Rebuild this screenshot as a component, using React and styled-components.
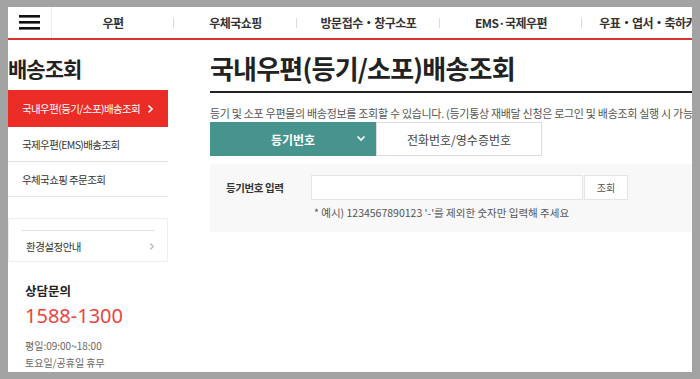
import React from "react";
import styled, { createGlobalStyle } from "styled-components";

const Global = createGlobalStyle`
  html, body { margin: 0; padding: 0; background: #a3a3a3; }
  body { font-family: "Noto Sans CJK KR", "Noto Sans", sans-serif; color: #222; }
  * { box-sizing: border-box; }
`;

const Frame = styled.div`
  margin: 7px 0 0 8px;
  width: 684px;
  height: 365px;
  background: #fff;
  overflow: hidden;
  display: flex;
  flex-direction: column;
`;

const Header = styled.header`
  height: 33px;
  flex: none;
  display: flex;
  align-items: stretch;
  border-bottom: 2px solid #d8342e;
  white-space: nowrap;
`;

const Burger = styled.div`
  width: 44px;
  flex: none;
  border-right: 1px solid #ececec;
  display: flex;
  align-items: center;
  justify-content: center;
`;

const NavItem = styled.div`
  width: ${(p) => p.w}px;
  flex: none;
  position: relative;
  display: flex;
  align-items: center;
  justify-content: center;
  font-size: 12px;
  font-weight: 700;
  color: #333;
  letter-spacing: -0.5px;
  &:not(:last-child)::after {
    content: "";
    position: absolute;
    right: 0;
    top: 11px;
    height: 10px;
    width: 1px;
    background: #ddd;
  }
`;

const Body = styled.div`
  flex: 1;
  display: flex;
  gap: 42px;
  min-height: 0;
`;

const Side = styled.aside`
  width: 160px;
  flex: none;
  display: flex;
  flex-direction: column;
`;

const SideTitle = styled.h2`
  margin: 14px 0 0;
  height: 36px;
  font-size: 21px;
  font-weight: 700;
  letter-spacing: -1px;
  color: #222;
  line-height: 28px;
`;

const MenuItem = styled.div`
  height: ${(p) => (p.active ? 37 : 35)}px;
  display: flex;
  align-items: center;
  justify-content: space-between;
  padding: 0 14px 0 14px;
  font-size: 10.5px;
  letter-spacing: -0.6px;
  background: ${(p) => (p.active ? "#ec2d27" : "#fff")};
  color: ${(p) => (p.active ? "#fff" : "#333")};
  border-bottom: ${(p) => (p.active ? "none" : "1px solid #e4e4e4")};
`;

const EnvBox = styled.div`
  margin-top: 21px;
  height: 44px;
  border: 1px solid #eeeeee;
  padding: 11px 12px 0;
`;

const EnvInner = styled.div`
  border-top: 1px solid #e2e2e2;
  height: 100%;
  display: flex;
  align-items: center;
  justify-content: space-between;
  padding-left: 5px;
  font-size: 10.5px;
  letter-spacing: -0.5px;
  color: #333;
`;

const Contact = styled.div`
  padding: 20px 0 0 17px;
  display: flex;
  flex-direction: column;
`;

const ContactTitle = styled.div`
  font-size: 12.5px;
  font-weight: 700;
  color: #222;
  line-height: 18px;
`;

const Phone = styled.div`
  font-family: "Noto Sans", sans-serif;
  font-size: 20px;
  color: #e8453e;
  line-height: 30px;
  margin-top: 1px;
`;

const Hours = styled.div`
  font-size: 10px;
  color: #666;
  line-height: 17px;
  margin-top: ${(p) => p.mt || 0}px;
`;

const Main = styled.main`
  flex: 1;
  min-width: 0;
  display: flex;
  flex-direction: column;
  white-space: nowrap;
`;

const Title = styled.h1`
  margin: 11px 0 0;
  height: 42px;
  font-size: 26px;
  font-weight: 700;
  letter-spacing: -0.8px;
  line-height: 34px;
  color: #222;
  border-bottom: 2px solid #222;
  width: 600px;
`;

const Desc = styled.p`
  margin: 0;
  height: 29px;
  line-height: 40px;
  font-size: 11px;
  letter-spacing: -0.3px;
  color: #555;
`;

const Tabs = styled.div`
  display: flex;
  height: 34px;
`;

const Tab = styled.div`
  width: 166px;
  display: flex;
  align-items: center;
  justify-content: center;
  position: relative;
  font-size: 12px;
  font-weight: ${(p) => (p.active ? 700 : 400)};
  background: ${(p) => (p.active ? "#47948f" : "#fff")};
  color: ${(p) => (p.active ? "#fff" : "#444")};
  border: ${(p) => (p.active ? "none" : "1px solid #dcdcdc")};
`;

const Chevron = styled.svg`
  position: absolute;
  right: 10px;
  top: 13px;
`;

const Panel = styled.div`
  margin-top: 8px;
  background: #f8f8f8;
  height: 68px;
  padding: 11px 0 0 16px;
`;

const FormRow = styled.div`
  display: flex;
  align-items: center;
  height: 25px;
`;

const Label = styled.div`
  width: 85px;
  font-size: 10.5px;
  font-weight: 700;
  color: #333;
  letter-spacing: -0.4px;
`;

const Input = styled.div`
  width: 272px;
  height: 25px;
  background: #fff;
  border: 1px solid #e4e4e4;
`;

const Button = styled.div`
  margin-left: 1px;
  width: 44px;
  height: 25px;
  background: #fff;
  border: 1px solid #e4e4e4;
  display: flex;
  align-items: center;
  justify-content: center;
  font-size: 10px;
  color: #555;
`;

const Hint = styled.div`
  margin: 5px 0 0 88px;
  font-size: 10.5px;
  color: #555;
  letter-spacing: 0;
`;

const Arrow = ({ color = "#fff", size = 7 }) => (
  <svg width={size} height={size + 3} viewBox="0 0 7 10">
    <path d="M1.5 1.5 L5 5 L1.5 8.5" fill="none" stroke={color} strokeWidth="1.6" />
  </svg>
);

export default function App() {
  return (
    <>
      <Global />
      <Frame>
        <Header>
          <Burger>
            <svg width="21" height="17" viewBox="0 0 21 17">
              <rect x="0" y="1" width="21" height="2.6" fill="#111" />
              <rect x="0" y="7" width="21" height="2.6" fill="#111" />
              <rect x="0" y="13" width="21" height="2.6" fill="#111" />
            </svg>
          </Burger>
          <NavItem w={122}>우편</NavItem>
          <NavItem w={123}>우체국쇼핑</NavItem>
          <NavItem w={143}>방문접수・창구소포</NavItem>
          <NavItem w={142}>EMS·국제우편</NavItem>
          <NavItem w={142}>우표・엽서・축하카드</NavItem>
        </Header>
        <Body>
          <Side>
            <SideTitle>배송조회</SideTitle>
            <MenuItem active>
              국내우편(등기/소포)배송조회
              <Arrow />
            </MenuItem>
            <MenuItem>국제우편(EMS)배송조회</MenuItem>
            <MenuItem>우체국쇼핑 주문조회</MenuItem>
            <EnvBox>
              <EnvInner>
                환경설정안내
                <Arrow color="#bbb" size={6} />
              </EnvInner>
            </EnvBox>
            <Contact>
              <ContactTitle>상담문의</ContactTitle>
              <Phone>1588-1300</Phone>
              <Hours mt={6}>평일:09:00~18:00</Hours>
              <Hours>토요일/공휴일 휴무</Hours>
            </Contact>
          </Side>
          <Main>
            <Title>국내우편(등기/소포)배송조회</Title>
            <Desc>
              등기 및 소포 우편물의 배송정보를 조회할 수 있습니다. (등기통상 재배달 신청은 로그인 및 배송조회 실행 시 가능합니다.)
            </Desc>
            <Tabs>
              <Tab active>
                등기번호
                <Chevron width="10" height="7" viewBox="0 0 10 7">
                  <path d="M1.5 1.5 L5 5 L8.5 1.5" fill="none" stroke="#fff" strokeWidth="1.6" />
                </Chevron>
              </Tab>
              <Tab>전화번호/영수증번호</Tab>
            </Tabs>
            <Panel>
              <FormRow>
                <Label>등기번호 입력</Label>
                <Input />
                <Button>조회</Button>
              </FormRow>
              <Hint>* 예시) 1234567890123 '-'를 제외한 숫자만 입력해 주세요</Hint>
            </Panel>
          </Main>
        </Body>
      </Frame>
    </>
  );
}
